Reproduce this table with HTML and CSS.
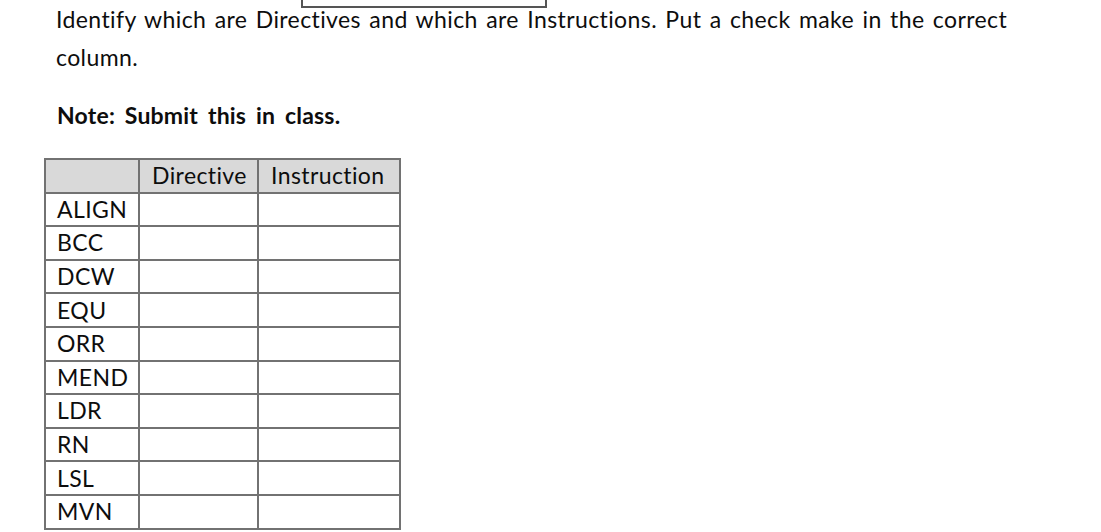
FILE: index.html
```html
<!DOCTYPE html>
<html>
<head>
<meta charset="utf-8">
<link rel="stylesheet" href="styles.css">
</head>
<body>
<div class="page">
  <div class="prev-box"></div>
  <p class="intro">Identify which are Directives and which are Instructions. Put a check make in the correct column.</p>
  <p class="note">Note: Submit this in class.</p>
  <table class="grid">
    <colgroup>
      <col class="c1"><col class="c2"><col class="c3">
    </colgroup>
    <thead>
      <tr><th></th><th>Directive</th><th>Instruction</th></tr>
    </thead>
    <tbody>
      <tr><td>ALIGN</td><td></td><td></td></tr>
      <tr><td>BCC</td><td></td><td></td></tr>
      <tr><td>DCW</td><td></td><td></td></tr>
      <tr><td>EQU</td><td></td><td></td></tr>
      <tr><td>ORR</td><td></td><td></td></tr>
      <tr><td>MEND</td><td></td><td></td></tr>
      <tr><td>LDR</td><td></td><td></td></tr>
      <tr><td>RN</td><td></td><td></td></tr>
      <tr><td>LSL</td><td></td><td></td></tr>
      <tr><td>MVN</td><td></td><td></td></tr>
    </tbody>
  </table>
</div>
</body>
</html>
```

FILE: styles.css
```css
html, body {
  margin: 0;
  padding: 0;
  background: #ffffff;
}
body {
  font-family: "Lato", "Open Sans", sans-serif;
  font-size: 23px;
  letter-spacing: 0.4px;
  word-spacing: 2.1px;
  font-variant-ligatures: none;
  color: #0d0d0d;
  overflow: hidden;
}
.page {
  position: relative;
  width: 1101px;
  height: 532px;
}
.prev-box {
  position: absolute;
  left: 301px;
  top: -4px;
  width: 242px;
  height: 8px;
  border: 2px solid #555555;
}
.intro {
  margin: 0;
  padding: 0 0 0 56px;
  line-height: 38px;
  width: 990px;
}
.note {
  margin: 20px 0 0 0;
  padding-left: 57px;
  font-weight: bold;
  line-height: 38px;
  letter-spacing: 0.2px;
  word-spacing: 4px;
}
.grid {
  margin: 24px 0 0 44px;
  border-collapse: collapse;
  table-layout: fixed;
  width: 355px;
}
.grid .c1 { width: 94px; }
.grid .c2 { width: 119px; }
.grid .c3 { width: 142px; }
.grid th, .grid td {
  border: 2px solid #727272;
  padding: 0 0 0 11px;
  height: 31.6px;
  line-height: 31px;
  text-align: left;
  font-weight: normal;
  white-space: nowrap;
  overflow: hidden;
}
.grid th {
  background: #d9d9d9;
  padding-left: 12px;
}
```
